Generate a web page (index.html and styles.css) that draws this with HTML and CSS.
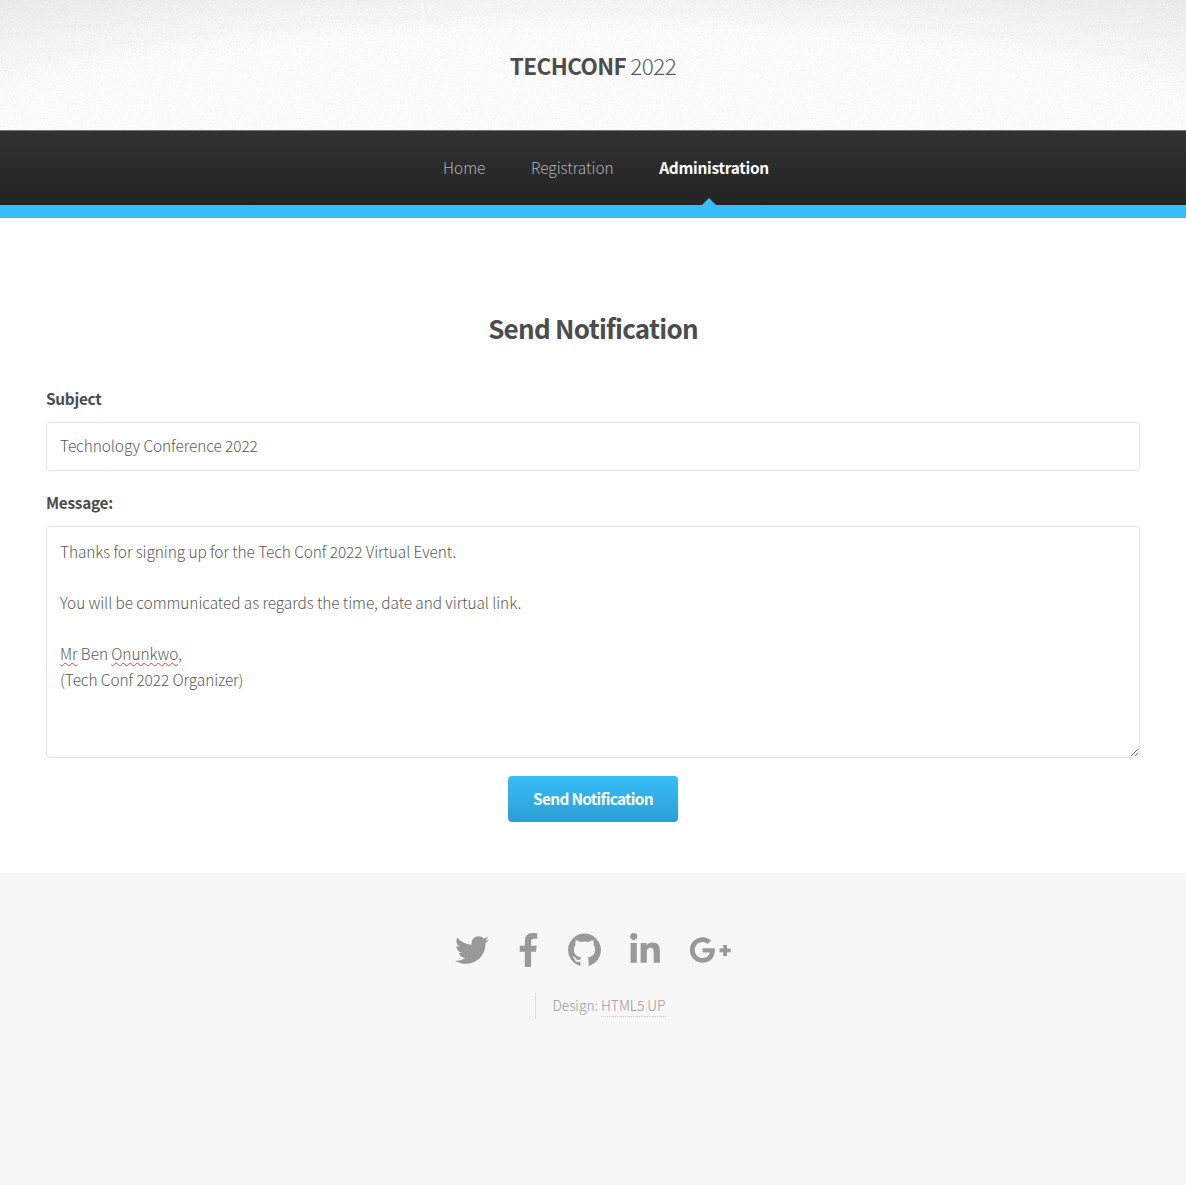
FILE: index.html
```html
<!DOCTYPE html>
<html lang="en">
<head>
<meta charset="utf-8">
<title>TechConf 2022</title>
<link rel="stylesheet" href="styles.css">
</head>
<body>
<header class="header">
  <h1 class="logo"><strong>TECHCONF</strong> <span class="year">2022</span></h1>
</header>
<nav class="nav">
  <a class="nav-link home">Home</a>
  <a class="nav-link registration">Registration</a>
  <a class="nav-link active">Administration</a>
</nav>
<main class="main">
  <h2 class="title">Send Notification</h2>
  <form class="form">
    <label class="label" for="subject">Subject</label>
    <input class="field subject" id="subject" type="text" value="Technology Conference 2022">
    <label class="label">Message:</label>
    <div class="field message"><p class="line thanks">Thanks for signing up for the Tech Conf 2022 Virtual Event.</p><p class="line info">You will be communicated as regards the time, date and virtual link.</p><p class="line"><span class="typo">Mr</span> Ben <span class="typo">Onunkwo</span>,</p><p class="line">(Tech Conf 2022 Organizer)</p></div>
    <button class="button" type="button">Send Notification</button>
  </form>
</main>
<footer class="footer">
  <div class="icons">
    <svg class="icon" width="34" height="34" viewBox="0 0 512 512"><path d="M459.37 151.716c.325 4.548.325 9.097.325 13.645 0 138.72-105.583 298.558-298.558 298.558-59.452 0-114.68-17.219-161.137-47.106 8.447.974 16.568 1.299 25.34 1.299 49.055 0 94.213-16.568 130.274-44.832-46.132-.975-84.792-31.188-98.112-72.772 6.498.974 12.995 1.624 19.818 1.624 9.421 0 18.843-1.3 27.614-3.573-48.081-9.747-84.143-51.98-84.143-102.985v-1.299c13.969 7.797 30.214 12.67 47.431 13.319-28.264-18.843-46.781-51.005-46.781-87.391 0-19.492 5.197-37.36 14.294-52.954 51.655 63.675 129.3 105.258 216.365 109.807-1.624-7.797-2.599-15.918-2.599-24.04 0-57.828 46.782-104.934 104.934-104.934 30.213 0 57.502 12.67 76.67 33.137 23.715-4.548 46.456-13.32 66.599-25.34-7.798 24.366-24.366 44.833-46.132 57.827 21.117-2.273 41.584-8.122 60.426-16.243-14.292 20.791-32.161 39.308-52.628 54.253z"/></svg>
    <svg class="icon facebook" width="19" height="34" viewBox="0 0 264 512"><path d="M76.7 512V283H0v-91h76.7v-71.7C76.7 42.4 124.3 0 193.8 0c33.3 0 61.9 2.5 70.2 3.6V85h-48.2c-37.8 0-45.1 18-45.1 44.3V192H256l-11.7 91h-73.6v229"/></svg>
    <svg class="icon github" width="33" height="34" viewBox="128 104 1536 1582"><path d="M896 128q209 0 385.500 103t279.500 279.500 103 385.500q0 251-146.500 451.500t-378.500 277.500q-27 5-40-7t-13-30q0-3 .5-76.500t.5-134.500q0-97-52-142 57-6 102.500-18t94-39 81-66.500 53-105 20.500-150.500q0-119-79-206 37-91-8-204-28-9-81 11t-92 44l-38 24q-93-26-192-26t-192 26q-16-11-42.500-27t-83.500-38.500-85-13.500q-45 113-8 204-79 87-79 206 0 85 20.500 150t52.500 105 80.500 67 94 39 102.500 18q-39 36-49 103-21 10-45 15t-57 5-65.500-21.500-55.500-62.500q-19-32-48.500-52t-49.500-24l-20-3q-21 0-29 4.500t-5 11.500 9 14 13 12l7 5q22 10 43.500 38t31.500 51l10 23q13 38 44 61.500t67 30 69.500 7 55.500-3.500l23-4q0 38 .5 88.500t.5 54.500q0 18-13 30t-40 7q-232-77-378.500-277.500t-146.500-451.500q0-209 103-385.500t279.500-279.500 385.500-103z"/></svg>
    <svg class="icon linkedin" width="30" height="34" viewBox="0 0 448 512"><path d="M100.280 448H7.400V148.900h92.880zM53.790 108.100C24.090 108.100 0 83.500 0 53.800a53.790 53.790 0 0 1 107.580 0c0 29.700-24.100 54.300-53.790 54.300zM447.900 448h-92.680V302.400c0-34.700-.7-79.200-48.290-79.200-48.290 0-55.690 37.700-55.690 76.700V448h-92.780V148.900h89.080v40.800h1.300c12.400-23.500 42.690-48.300 87.880-48.300 94 0 111.280 61.900 111.280 142.300V448z"/></svg>
    <svg class="icon" width="42" height="34" viewBox="0 0 632 512"><path d="M386.061 228.496c1.834 9.692 3.143 19.384 3.143 31.956C389.204 370.205 315.599 448 204.800 448c-106.084 0-192-85.915-192-192s85.916-192 192-192c51.864 0 95.083 18.859 128.611 50.292l-52.126 50.030c-14.145-13.621-39.028-29.599-76.485-29.599-65.484 0-118.920 54.221-118.920 121.277 0 67.056 53.436 121.277 118.920 121.277 75.961 0 104.513-54.745 108.965-82.773H204.800v-66.009h181.261zm185.406 6.437V179.200h-56.001v55.733h-55.733v56.001h55.733v55.733h56.001v-55.733H627.200v-56.001h-55.733z"/></svg>
  </div>
  <div class="copyright"><span>Design: <a class="credit">HTML5 UP</a></span></div>
</footer>
</body>
</html>
```
FILE: styles.css
```css
* { box-sizing: border-box; }
body {
  margin: 0;
  min-height: 1185px;
  display: flex;
  flex-direction: column;
  background: #fff;
  color: #4c4c4c;
  font-family: "Noto Sans CJK JP", "Noto Sans CJK SC", sans-serif;
  font-weight: 300;
  font-size: 15.4px;
  line-height: 25.5px;
}
h1, h2, p { margin: 0; }
.header {
  height: 130px;
  display: flex;
  justify-content: center;
  padding-top: 47px;
  background:
    url("data:image/svg+xml,%3Csvg xmlns='http://www.w3.org/2000/svg' width='256' height='256'%3E%3Cfilter id='n' x='0' y='0' width='100%25' height='100%25' color-interpolation-filters='sRGB'%3E%3CfeTurbulence type='fractalNoise' baseFrequency='.6' numOctaves='2' stitchTiles='stitch'/%3E%3CfeColorMatrix values='0 0 0 0 .5 0 0 0 0 .5 0 0 0 0 .5 .16 0 0 0 -.05'/%3E%3C/filter%3E%3Crect width='256' height='256' filter='url(%23n)'/%3E%3C/svg%3E"),
    radial-gradient(ellipse 1000px 165px at 50% 130px, #fff 58%, #ececec 100%);
}
.logo {
  font-size: 22.5px;
  line-height: 36px;
  font-weight: 300;
  letter-spacing: -0.6px;
  white-space: nowrap;
}
.logo strong { font-weight: 700; }
.year { color: #5c5c5c; }
.nav {
  height: 88px;
  display: flex;
  justify-content: center;
  gap: 45.6px;
  padding: 24px 0 0 26px;
  border-top: 1px solid #777;
  border-bottom: 13px solid #37bdf8;
  background: linear-gradient(#323232, #242424);
  color: #b2b2b2;
}
.nav-link { position: relative; white-space: nowrap; }
.active { color: #fff; font-weight: 700; letter-spacing: -0.26px; }
.active::after {
  content: "";
  position: absolute;
  left: 43px;
  top: 43px;
  border: 7px solid transparent;
  border-top: 0;
  border-bottom-color: #37bdf8;
}
.main { padding: 87px 46px 51px; }
.title {
  font-size: 26px;
  line-height: 46px;
  font-weight: 700;
  letter-spacing: -0.73px;
  text-align: center;
  margin-bottom: 35px;
}
.form { display: flex; flex-direction: column; }
.label { font-weight: 700; margin-bottom: 10px; letter-spacing: -0.28px; }
.field {
  width: 100%;
  border: 1px solid #e3e3e3;
  border-radius: 4px;
  background: #fff;
  color: #585858;
  font: inherit;
  letter-spacing: -0.065px;
  padding: 0 13px;
}
.subject { height: 49px; margin-bottom: 19px; padding-bottom: 2px; }
.message {
  height: 232px;
  margin-top: 1px;
  margin-bottom: 18px;
  padding-top: 12px;
  overflow: hidden;
  resize: vertical;
}
.line { white-space: nowrap; }
.thanks, .info { margin-bottom: 25.5px; }
.typo { text-decoration: underline wavy #e53b3b 1.3px; text-underline-offset: 2px; }
.button {
  align-self: center;
  width: 170px;
  height: 46px;
  padding: 0;
  border: 0;
  border-radius: 4px;
  background: linear-gradient(#37bdf8, #2c9fd4);
  color: #fff;
  font: inherit;
  font-weight: 700;
  letter-spacing: -0.68px;
}
.footer {
  flex: 1;
  padding-top: 60px;
  background: #f7f7f7;
  color: #999;
}
.icons { display: flex; justify-content: center; gap: 30px; }
.icon { fill: #999; }
.github, .linkedin { margin-right: -1px; }
.copyright {
  display: flex;
  justify-content: center;
  margin-top: 26px;
  font-size: 13.9px;
  letter-spacing: -0.05px;
  padding-left: 15px;
}
.copyright span { border-left: 1px solid #ddd; padding-left: 16px; }
.credit { display: inline-block; line-height: 22px; border-bottom: 1px dotted #ccc; }
```
